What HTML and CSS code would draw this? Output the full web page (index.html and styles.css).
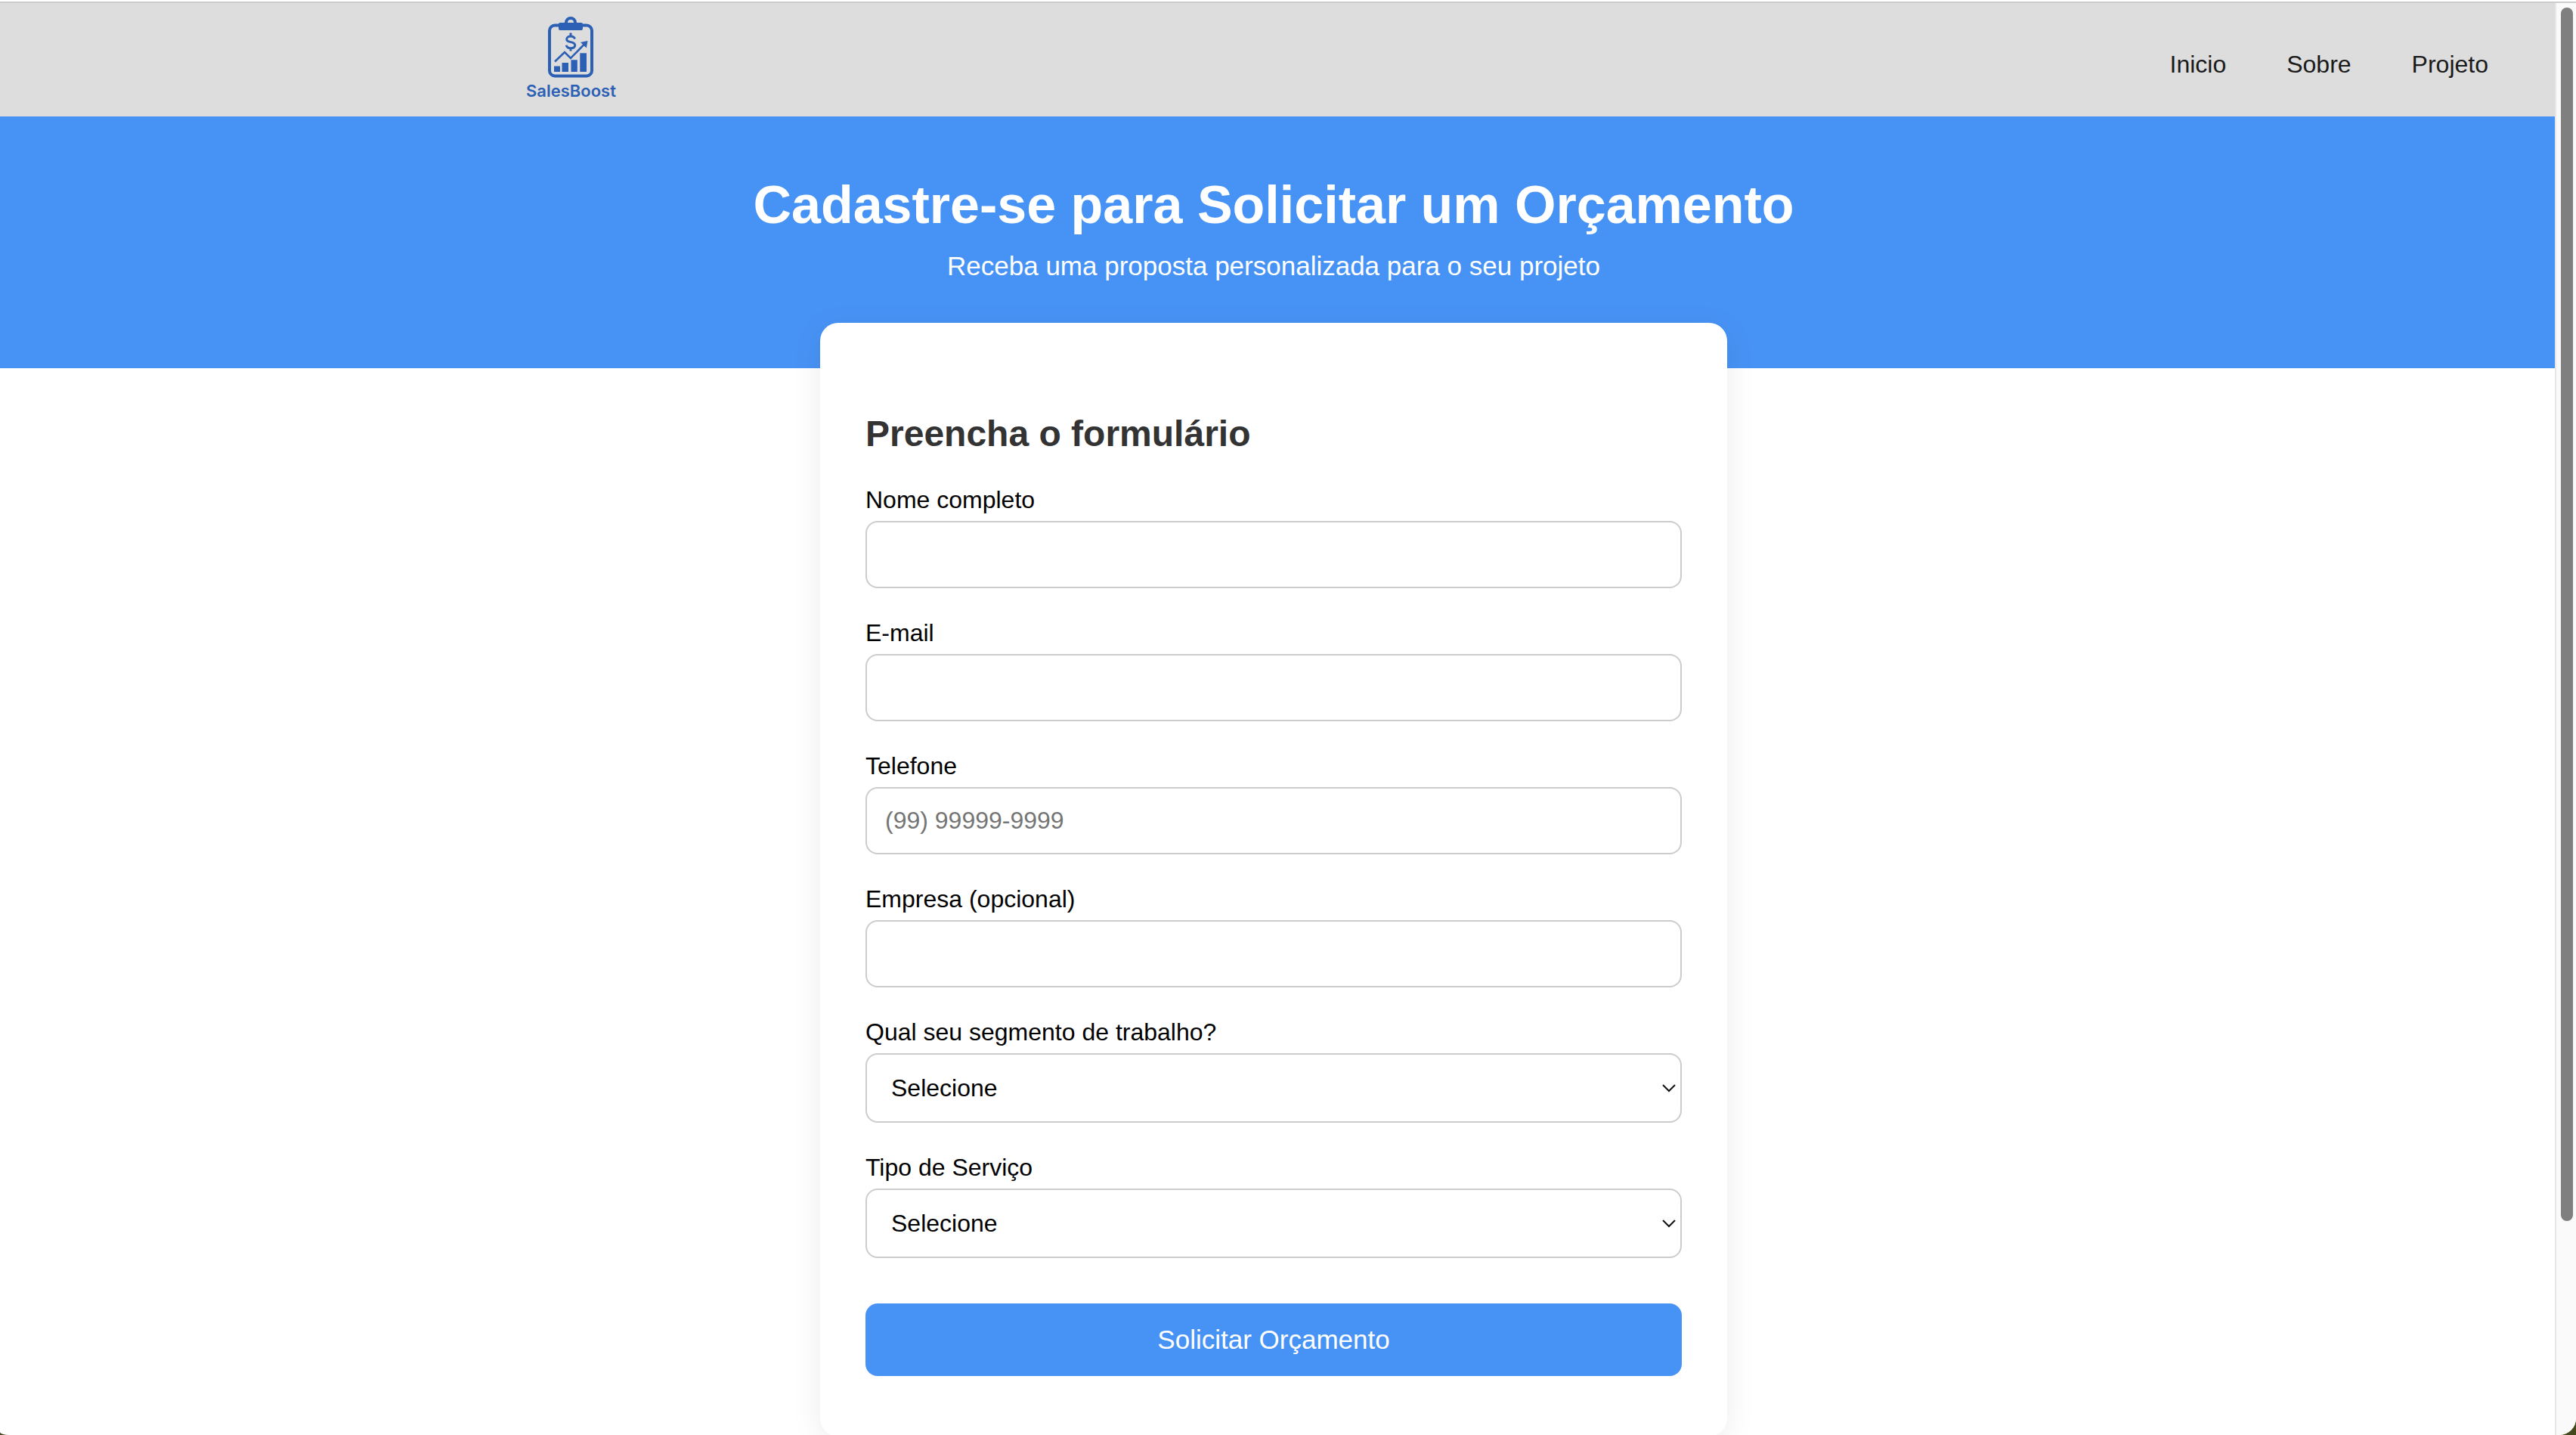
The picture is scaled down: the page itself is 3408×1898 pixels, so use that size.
FILE: index.html
```html
<!DOCTYPE html>
<html lang="pt-BR">
<head>
  <meta charset="UTF-8">
  <meta name="viewport" content="width=device-width, initial-scale=1">
  <title>SalesBoost</title>
  <link rel="stylesheet" href="styles.css">
</head>
<body>
  <div class="window">
    <div class="page">
      <header class="header">
        <a class="logo" href="#">
          <svg class="logo-icon" width="62" height="82" viewBox="0 0 62 82" aria-hidden="true">
            <rect x="3" y="11.500" width="56" height="67" rx="7" fill="none" stroke="currentColor" stroke-width="4"/>
            <path d="M17 8h6a8 8 0 0 1 16 0h6a2 2 0 0 1 2 2v6a2 2 0 0 1-2 2H17a2 2 0 0 1-2-2v-6a2 2 0 0 1 2-2z" fill="currentColor"/>
            <path d="M27 8a4 4 0 0 1 8 0z" fill="#dddddd"/>
            <path d="M36.500 29.500c-.6-2-2.600-3.500-5.500-3.500-3.200 0-5.300 1.600-5.300 3.900 0 2.400 2 3 5.300 3.700 3.500.7 5.700 1.600 5.700 4.200 0 2.500-2.200 4-5.700 4-3.200 0-5.300-1.500-5.800-4M31 21.500v4.500M31 41.500v4" fill="none" stroke="currentColor" stroke-width="3"/>
            <path d="M10 59.500l13-12.500 8 8 18-18.500" fill="none" stroke="currentColor" stroke-width="2.600"/>
            <path d="M44 34l9.500-2-1.700 9.500z" fill="currentColor"/>
            <path d="M9 65.500h8V73H9zM19.500 61H28v12h-8.500zM31.500 57.300h8.300V73h-8.300zM43.300 48.300H52V73h-8.700z" fill="currentColor"/>
          </svg>
          <span class="logo-text">SalesBoost</span>
        </a>
        <nav class="nav">
          <a href="#">Inicio</a>
          <a href="#">Sobre</a>
          <a href="#">Projeto</a>
        </nav>
      </header>

      <section class="hero">
        <h1>Cadastre-se para Solicitar um Orçamento</h1>
        <p>Receba uma proposta personalizada para o seu projeto</p>
      </section>

      <main class="content">
        <form class="card">
          <h2>Preencha o formulário</h2>
          <div class="field">
            <label for="nome">Nome completo</label>
            <input id="nome" type="text">
          </div>
          <div class="field">
            <label for="email">E-mail</label>
            <input id="email" type="email">
          </div>
          <div class="field">
            <label for="telefone">Telefone</label>
            <input id="telefone" type="tel" placeholder="(99) 99999-9999">
          </div>
          <div class="field">
            <label for="empresa">Empresa (opcional)</label>
            <input id="empresa" type="text">
          </div>
          <div class="field">
            <label for="segmento">Qual seu segmento de trabalho?</label>
            <div class="select">
              <select id="segmento"><option>Selecione</option></select>
              <svg class="chevron" width="18" height="12" viewBox="0 0 18 12" aria-hidden="true"><path d="M1 2l8 8 8-8"/></svg>
            </div>
          </div>
          <div class="field">
            <label for="servico">Tipo de Serviço</label>
            <div class="select">
              <select id="servico"><option>Selecione</option></select>
              <svg class="chevron" width="18" height="12" viewBox="0 0 18 12" aria-hidden="true"><path d="M1 2l8 8 8-8"/></svg>
            </div>
          </div>
          <button class="submit" type="submit">Solicitar Orçamento</button>
        </form>
      </main>
    </div>
    <div class="scrollbar" aria-hidden="true"><div class="thumb"></div></div>
  </div>
</body>
</html>
```
FILE: styles.css
```css
* {
  box-sizing: border-box;
  margin: 0;
  padding: 0;
}

body {
  background: #45471c;
  color: #000;
  font-family: "Liberation Sans", Arial, Helvetica, sans-serif;
  font-size: 32px;
  line-height: 36px;
}

.window {
  display: flex;
  height: 100vh;
  overflow: hidden;
  padding-top: 4px;
  background: linear-gradient(#fff 2px, #ccc 2px, #ccc 4px, #fff 4px);
  border-radius: 0 0 22px 12px / 0 0 22px 4px;
}

.page {
  flex: 1;
  min-width: 0;
}

/* Header */
.header {
  display: flex;
  justify-content: space-between;
  height: 150px;
  padding: 18px 88px 0 696px;
  background: #ddd;
}

.logo {
  display: flex;
  flex-direction: column;
  align-items: center;
  color: #2c60b4;
  text-decoration: none;
}

.logo-text {
  font-family: Inter, "Liberation Sans", sans-serif;
  font-size: 22px;
  font-weight: 600;
  line-height: 32px;
}

.nav {
  display: flex;
  gap: 80px;
  padding-top: 45px;
}

.nav a {
  color: #1a1a1a;
  text-decoration: none;
}

/* Hero */
.hero {
  padding: 77px 10px 115px 0;
  background: #4793f5;
  color: #fff;
  text-align: center;
}

.hero h1 {
  margin-bottom: 21px;
  font-size: 70px;
  line-height: 80px;
}

.hero p {
  font-size: 35px;
  line-height: 40px;
}

/* Form */
.content {
  padding-right: 10px;
}

.card {
  position: relative;
  max-width: 1200px;
  margin: -60px auto 0;
  padding: 120px 60px 80px;
  background: #fff;
  border-radius: 24px;
  box-shadow: 0 8px 40px rgba(0, 0, 0, 0.08);
}

.card h2 {
  margin-bottom: 42px;
  color: #333;
  font-size: 48px;
  line-height: 54px;
}

.field {
  margin-bottom: 41px;
}

.field label {
  display: block;
  margin-bottom: 10px;
}

.field input,
.field select {
  display: block;
  width: 100%;
  height: 89px;
  padding: 0 24px;
  border: 2px solid #ccc;
  border-radius: 16px;
  background: #fff;
  color: #000;
  font: inherit;
}

.field input::placeholder {
  color: #757575;
}

.field select {
  height: 92px;
  padding: 0 32px;
  appearance: none;
}

.select {
  position: relative;
}

.chevron {
  position: absolute;
  top: 40px;
  right: 8px;
  fill: none;
  stroke: #111;
  stroke-width: 2;
  pointer-events: none;
}

.submit {
  display: block;
  width: 100%;
  height: 96px;
  margin-top: 60px;
  border: 0;
  border-radius: 16px;
  background: #4793f5;
  color: #fff;
  font: inherit;
  font-size: 35px;
}

/* Scrollbar */
.scrollbar {
  width: 28px;
  padding: 6px 4px 0 6px;
  border-left: 2px solid #e7e7e7;
  background: #fafafa;
}

.thumb {
  height: 85%;
  border-radius: 8px;
  background: #7f7f7f;
}
```
